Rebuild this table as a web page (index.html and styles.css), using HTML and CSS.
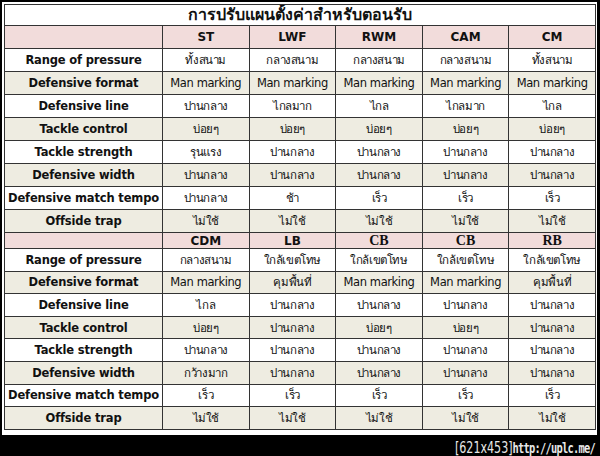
FILE: index.html
```html
<!DOCTYPE html>
<html lang="th">
<head>
<meta charset="utf-8">
<link rel="stylesheet" href="styles.css">
</head>
<body>
<div class="panel">
<table class="grid">
<colgroup>
<col class="c-label"><col class="c-pos"><col class="c-pos"><col class="c-pos"><col class="c-pos"><col class="c-pos">
</colgroup>
<tbody class="sec1">
<tr class="title-row"><td colspan="6">การปรับแผนตั้งค่าสำหรับตอนรับ</td></tr>
<tr class="head"><td></td><td>ST</td><td>LWF</td><td>RWM</td><td>CAM</td><td>CM</td></tr>
<tr class="w"><th>Range of pressure</th><td>ทั้งสนาม</td><td>กลางสนาม</td><td>กลางสนาม</td><td>กลางสนาม</td><td>ทั้งสนาม</td></tr>
<tr class="b"><th>Defensive format</th><td>Man marking</td><td>Man marking</td><td>Man marking</td><td>Man marking</td><td>Man marking</td></tr>
<tr class="w"><th>Defensive line</th><td>ปานกลาง</td><td>ไกลมาก</td><td>ไกล</td><td>ไกลมาก</td><td>ไกล</td></tr>
<tr class="b"><th>Tackle control</th><td>บ่อยๆ</td><td>บ่อยๆ</td><td>บ่อยๆ</td><td>บ่อยๆ</td><td>บ่อยๆ</td></tr>
<tr class="w"><th>Tackle strength</th><td>รุนแรง</td><td>ปานกลาง</td><td>ปานกลาง</td><td>ปานกลาง</td><td>ปานกลาง</td></tr>
<tr class="b"><th>Defensive width</th><td>ปานกลาง</td><td>ปานกลาง</td><td>ปานกลาง</td><td>ปานกลาง</td><td>ปานกลาง</td></tr>
<tr class="w"><th>Defensive match tempo</th><td>ปานกลาง</td><td>ช้า</td><td>เร็ว</td><td>เร็ว</td><td>เร็ว</td></tr>
<tr class="b"><th>Offside trap</th><td>ไม่ใช้</td><td>ไม่ใช้</td><td>ไม่ใช้</td><td>ไม่ใช้</td><td>ไม่ใช้</td></tr>
</tbody>
<tbody class="sec2">
<tr class="head head2"><td></td><td>CDM</td><td>LB</td><td class="serif">CB</td><td class="serif">CB</td><td class="serif">RB</td></tr>
<tr class="w"><th>Range of pressure</th><td>กลางสนาม</td><td>ใกล้เขตโทษ</td><td>ใกล้เขตโทษ</td><td>ใกล้เขตโทษ</td><td>ใกล้เขตโทษ</td></tr>
<tr class="b"><th>Defensive format</th><td>Man marking</td><td>คุมพื้นที่</td><td>Man marking</td><td>Man marking</td><td>คุมพื้นที่</td></tr>
<tr class="w"><th>Defensive line</th><td>ไกล</td><td>ปานกลาง</td><td>ปานกลาง</td><td>ปานกลาง</td><td>ปานกลาง</td></tr>
<tr class="b"><th>Tackle control</th><td>บ่อยๆ</td><td>ปานกลาง</td><td>บ่อยๆ</td><td>บ่อยๆ</td><td>ปานกลาง</td></tr>
<tr class="w"><th>Tackle strength</th><td>ปานกลาง</td><td>ปานกลาง</td><td>ปานกลาง</td><td>ปานกลาง</td><td>ปานกลาง</td></tr>
<tr class="b"><th>Defensive width</th><td>กว้างมาก</td><td>ปานกลาง</td><td>ปานกลาง</td><td>ปานกลาง</td><td>ปานกลาง</td></tr>
<tr class="w"><th>Defensive match tempo</th><td>เร็ว</td><td>เร็ว</td><td>เร็ว</td><td>เร็ว</td><td>เร็ว</td></tr>
<tr class="b"><th>Offside trap</th><td>ไม่ใช้</td><td>ไม่ใช้</td><td>ไม่ใช้</td><td>ไม่ใช้</td><td>ไม่ใช้</td></tr>
</tbody>
</table>
</div>
<div class="stamp"><span class="dim">[621x453]</span><span class="url">http://uplc.me/</span></div>
</body>
</html>
```
FILE: styles.css
```css
html, body {
  margin: 0;
  padding: 0;
  background: #000;
}
body {
  width: 600px;
  height: 456px;
  overflow: hidden;
  font-family: Tahoma, "DejaVu Sans", "Noto Sans", sans-serif;
}
.panel {
  background: #fff;
  margin: 2px 3px 0 2px;
  padding: 2px 2px 5px 2px;
}
.grid {
  border-collapse: collapse;
  table-layout: fixed;
  width: 591px;
  color: #111;
}
.c-label { width: 158px; }
.c-pos { width: 86.6px; }
.grid td, .grid th {
  border: 1px solid #333;
  padding: 0;
  height: 22px;
  text-align: center;
  font-size: 11.5px;
  letter-spacing: -0.4px;
  line-height: 14px;
  white-space: nowrap;
  overflow: hidden;
}
.sec2 .w td, .sec2 .w th, .sec2 .b td, .sec2 .b th {
  height: 21.6px;
}
.grid th {
  font-weight: bold;
  font-size: 11.5px;
  letter-spacing: -0.15px;
}
.title-row td {
  height: 20px;
  font-weight: bold;
  font-size: 16px;
  letter-spacing: 0;
  background: #fff;
}
.w td, .w th { background: #fff; }
.b td, .b th { background: #eeece1; }
.head td {
  background: #f2dcdb;
  font-weight: bold;
  font-size: 12px;
  letter-spacing: 0;
}
.head2 td {
  height: 15px;
  line-height: 14px;
}
.head2 td.serif {
  font-family: "Liberation Serif", serif;
  font-size: 14px;
}
.stamp {
  margin-top: 3px;
  margin-right: 5px;
  text-align: right;
  color: #e8e8e8;
  white-space: nowrap;
  transform: scaleX(0.74);
  transform-origin: right center;
}
.dim {
  font-family: "DejaVu Sans", sans-serif;
  font-size: 15px;
  font-weight: normal;
}
.url {
  font-family: "DejaVu Sans Mono", monospace;
  font-size: 14px;
  font-weight: bold;
  letter-spacing: -1px;
}
```
